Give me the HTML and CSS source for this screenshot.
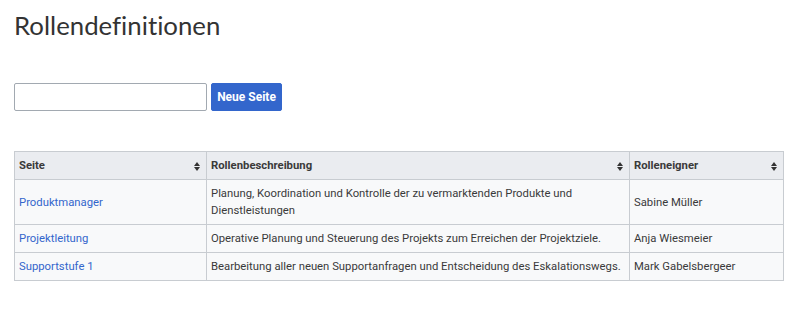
FILE: index.html
```html
<!DOCTYPE html>
<html lang="de">
<head>
<meta charset="utf-8">
<link rel="stylesheet" href="styles.css">
</head>
<body>
<div class="page">
  <h1 class="title">Rollendefinitionen</h1>
  <form class="create">
    <input class="create-input" type="text">
    <button class="create-btn" type="button">Neue Seite</button>
  </form>
  <table class="wikitable">
    <colgroup>
      <col class="w1">
      <col class="w2">
      <col class="w3">
    </colgroup>
    <thead>
      <tr>
        <th><span>Seite</span><i class="sort"></i></th>
        <th><span>Rollenbeschreibung</span><i class="sort"></i></th>
        <th><span>Rolleneigner</span><i class="sort"></i></th>
      </tr>
    </thead>
    <tbody>
      <tr>
        <td><a href="#">Produktmanager</a></td>
        <td>Planung, Koordination und Kontrolle der zu vermarktenden Produkte und Dienstleistungen</td>
        <td>Sabine Müller</td>
      </tr>
      <tr>
        <td><a href="#">Projektleitung</a></td>
        <td>Operative Planung und Steuerung des Projekts zum Erreichen der Projektziele.</td>
        <td>Anja Wiesmeier</td>
      </tr>
      <tr>
        <td><a href="#">Supportstufe 1</a></td>
        <td>Bearbeitung aller neuen Supportanfragen und Entscheidung des Eskalationswegs.</td>
        <td>Mark Gabelsbergeer</td>
      </tr>
    </tbody>
  </table>
</div>
</body>
</html>
```
FILE: styles.css
```css
html, body { margin: 0; padding: 0; background: #fff; }
body { font-family: Roboto, "Liberation Sans", sans-serif; color: #202122; }
.page { padding: 9px 14px 0 14px; }
.title {
  margin: 0;
  font-family: Lato, "Open Sans", sans-serif;
  font-weight: 400;
  font-size: 25.8px;
  line-height: 32px;
  color: #333;
  font-variant-ligatures: none;
}
.create { display: flex; gap: 4px; margin-top: 42px; }
.create-input {
  box-sizing: border-box;
  width: 193px; height: 28px;
  border: 1px solid #a2a9b1;
  border-radius: 2px;
  margin: 0; padding: 0 6px;
  background: #fff;
}
.create-btn {
  box-sizing: border-box;
  height: 28px; width: 71px;
  margin: 0; padding: 0;
  border: 1px solid #3366cc;
  border-radius: 2px;
  background: #3366cc;
  color: #fff;
  font-family: Roboto, sans-serif;
  font-weight: 700;
  font-size: 12px;
}
.wikitable {
  margin-top: 40px;
  width: 769px;
  table-layout: fixed;
  border-collapse: collapse;
  background: #f8f9fa;
  border: 1px solid #c8ccd1;
  font-size: 11.3px;
  line-height: 17px;
  color: #3a3a3a;
}
.w1 { width: 192px; }
.w2 { width: 423px; }
.w3 { width: 154px; }
.wikitable th, .wikitable td {
  border: 1px solid #c8ccd1;
  padding: 5px 5px 5px 4px;
  text-align: left;
  vertical-align: middle;
}
.wikitable th {
  background: #eaecf0;
  font-weight: 700;
  color: #3a3a3a;
  position: relative;
  padding-right: 20px;
}
.sort {
  position: absolute;
  right: 5px; top: 50%;
  width: 7px; height: 9px;
  margin-top: -4px;
}
.sort::before, .sort::after {
  content: "";
  position: absolute; left: 0;
  border-left: 3.5px solid transparent;
  border-right: 3.5px solid transparent;
}
.sort::before { top: 0; border-bottom: 4px solid #333; }
.sort::after { bottom: 0; border-top: 4px solid #333; }
.wikitable a { color: #3366cc; text-decoration: none; }
```
